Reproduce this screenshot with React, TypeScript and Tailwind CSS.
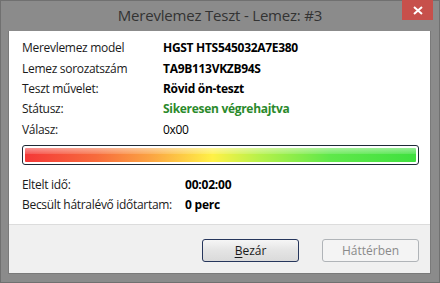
export default function App() {
  const info = [
    { label: "Merevlemez model", value: "HGST HTS545032A7E380", cls: "font-bold text-black" },
    { label: "Lemez sorozatszám", value: "TA9B113VKZB94S", cls: "font-bold text-black" },
    { label: "Teszt művelet:", value: "Rövid ön-teszt", cls: "font-bold text-black" },
    { label: "Státusz:", value: "Sikeresen végrehajtva", cls: "font-bold text-[#2b8a2b]" },
    { label: "Válasz:", value: "0x00", cls: "text-black" },
  ];

  return (
    <div className="w-[440px] h-[283px] bg-[#8b8b8b] flex flex-col font-['Open_Sans',sans-serif] text-[12px] text-[#1a1a1a] border border-[#707070]">
      <div className="relative h-[30px] flex items-center justify-center">
        <span className="text-[15px] text-[#333] tracking-[-0.2px] mt-[-1px]">Merevlemez Teszt - Lemez: #3</span>
        <div className="absolute top-[-1px] right-[6px] w-[31px] h-[20px] bg-[#c7504b] flex items-center justify-center">
          <svg width="10" height="9" viewBox="0 0 10 9">
            <path d="M1 1 L9 8 M9 1 L1 8" stroke="white" strokeWidth="2" />
          </svg>
        </div>
      </div>
      <div className="ml-[7px] mr-[8px] mb-[8px] flex-1 flex flex-col border border-[#7a7a7a] border-t-0">
        <div className="bg-white h-[194px] border-b border-[#dcdcdc] pl-[13px] pr-[11px] pt-[7px]">
          {info.map((r) => (
            <div key={r.label} className="flex h-[20.4px] items-center">
              <span className="w-[141px] tracking-[-0.3px]">{r.label}</span>
              <span className={`${r.cls} tracking-[-0.3px]`}>{r.value}</span>
            </div>
          ))}
          <div className="mt-[5px] h-[20px] rounded-[3px] border border-[#1f2a36] p-[2px] bg-white">
            <div className="relative h-full rounded-[1px] bg-[linear-gradient(90deg,#f43838_0%,#f76a3c_18%,#fba342_32%,#fff146_48%,#b6f14a_60%,#5fe84a_78%,#3fe03f_100%)]">
              <div className="absolute inset-x-0 top-0 h-[45%] bg-[linear-gradient(180deg,rgba(255,255,255,0.45),rgba(255,255,255,0.15))]" />
            </div>
          </div>
          <div className="mt-[10px] flex h-[20px] items-center">
            <span className="w-[163px] tracking-[-0.3px]">Eltelt idő:</span>
            <span className="font-bold text-black tracking-[-0.2px]">00:02:00</span>
          </div>
          <div className="flex h-[20px] items-center">
            <span className="w-[163px] tracking-[-0.3px]">Becsült hátralévő időtartam:</span>
            <span className="font-bold text-black tracking-[-0.2px]">0 perc</span>
          </div>
        </div>
        <div className="flex-1 bg-[#f0f0f0] flex justify-end items-start pt-[14px] pr-[11px] gap-[23px]">
          <button className="w-[97px] h-[23px] rounded-[3px] border border-[#26365c] bg-[linear-gradient(180deg,#f6f6f6,#e4e4e4_50%,#dadada)] text-[#1a1a1a] text-[12px] leading-none">
            <span className="underline underline-offset-2">B</span>ezár
          </button>
          <button className="w-[97px] h-[23px] rounded-[3px] border border-[#b0b4b8] bg-[#f4f4f4] text-[#8a8a8a] text-[12px] leading-none">
            Háttérben
          </button>
        </div>
      </div>
    </div>
  );
}
